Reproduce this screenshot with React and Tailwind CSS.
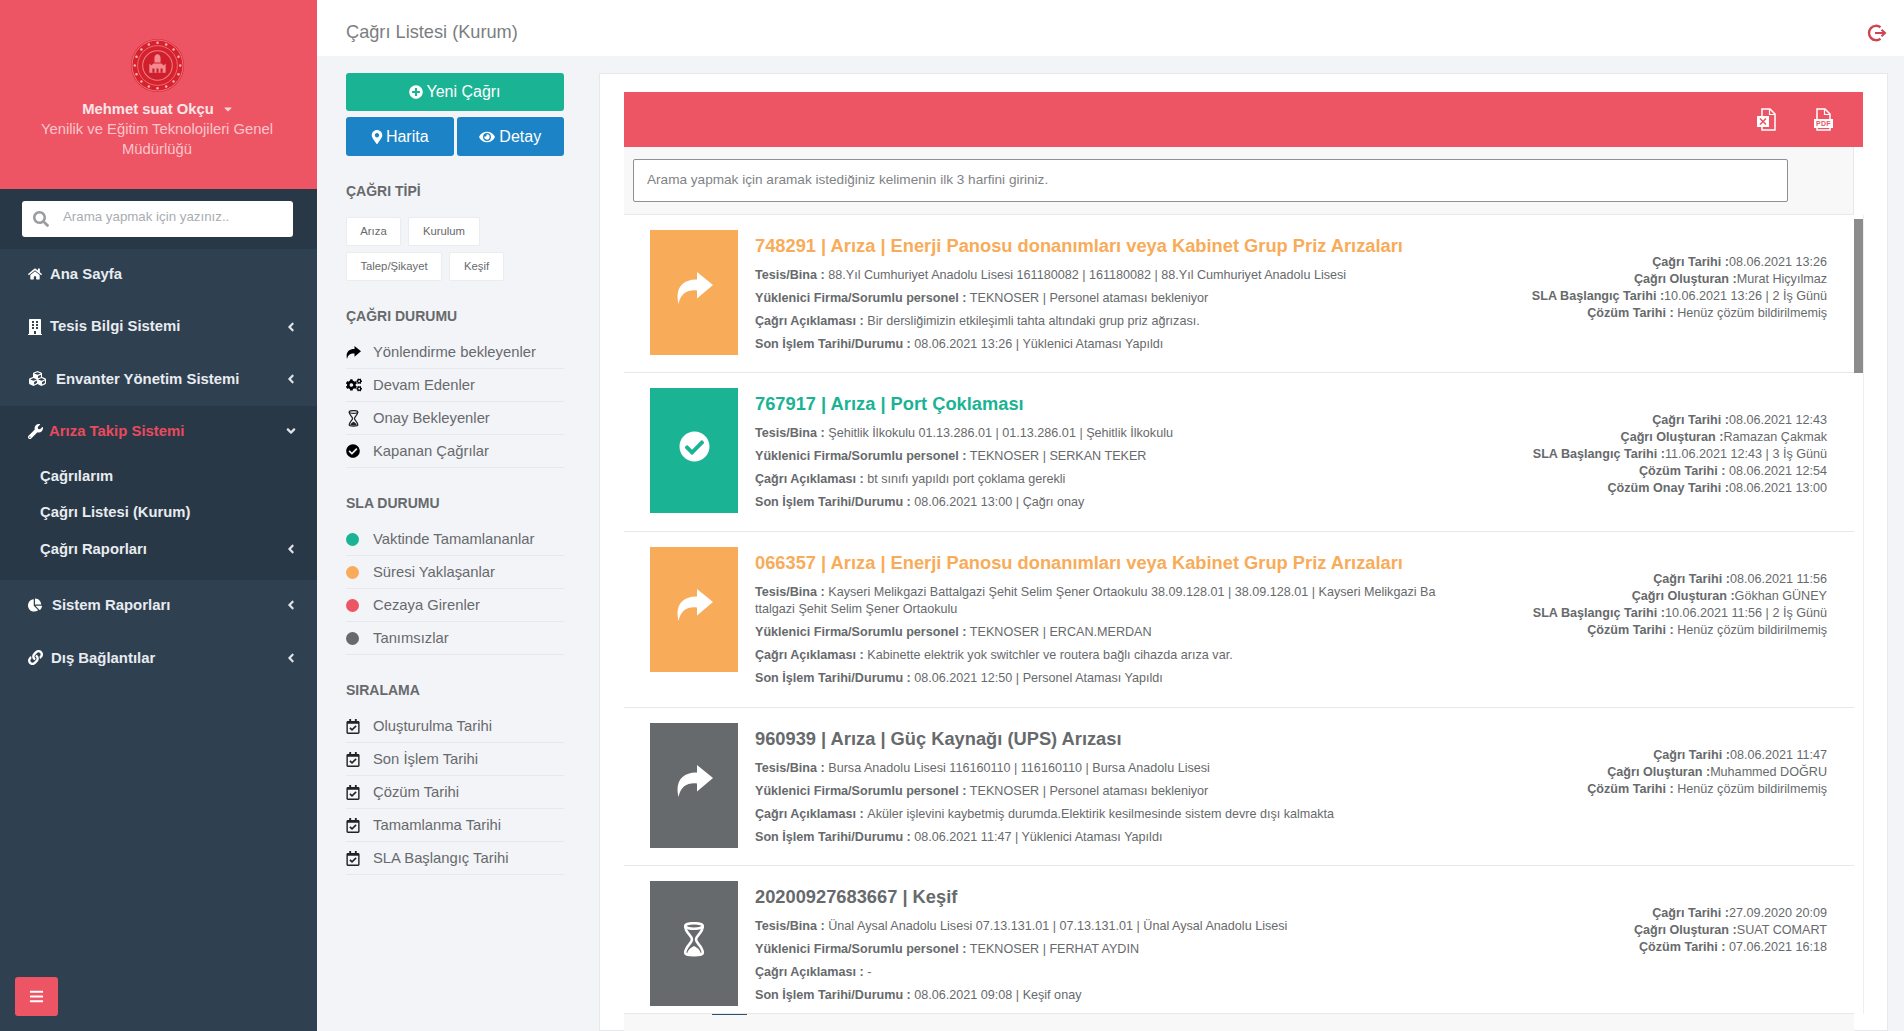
import React from 'react';
import {
  FaAngleDown, FaAngleLeft, FaBars, FaBuilding, FaCaretDown, FaChartPie, FaCheckCircle,
  FaCogs, FaCubes, FaEye, FaHome, FaLink, FaMapMarkerAlt, FaPlusCircle, FaRegCalendarCheck,
  FaSearch, FaWrench,
} from 'react-icons/fa';

const calls = [
  {
    title: '748291 | Arıza | Enerji Panosu donanımları veya Kabinet Grup Priz Arızaları',
    color: 'text-[#f8ac59]', box: 'bg-[#f8ac59]', icon: 'share', h: 'h-[158px]',
    tesis: ['88.Yıl Cumhuriyet Anadolu Lisesi 161180082 | 161180082 | 88.Yıl Cumhuriyet Anadolu Lisesi'],
    firma: 'TEKNOSER | Personel ataması bekleniyor',
    desc: 'Bir dersliğimizin etkileşimli tahta altındaki grup priz ağrızası.',
    son: '08.06.2021 13:26 | Yüklenici Ataması Yapıldı',
    right: [['Çağrı Tarihi :', '08.06.2021 13:26'], ['Çağrı Oluşturan :', 'Murat Hiçyılmaz'], ['SLA Başlangıç Tarihi :', '10.06.2021 13:26 | 2 İş Günü'], ['Çözüm Tarihi : ', 'Henüz çözüm bildirilmemiş']],
  },
  {
    title: '767917 | Arıza | Port Çoklaması',
    color: 'text-[#1ab394]', box: 'bg-[#1ab394]', icon: 'check', h: 'h-[159px]',
    tesis: ['Şehitlik İlkokulu 01.13.286.01 | 01.13.286.01 | Şehitlik İlkokulu'],
    firma: 'TEKNOSER | SERKAN TEKER',
    desc: 'bt sınıfı yapıldı port çoklama gerekli',
    son: '08.06.2021 13:00 | Çağrı onay',
    right: [['Çağrı Tarihi :', '08.06.2021 12:43'], ['Çağrı Oluşturan :', 'Ramazan Çakmak'], ['SLA Başlangıç Tarihi :', '11.06.2021 12:43 | 3 İş Günü'], ['Çözüm Tarihi : ', '08.06.2021 12:54'], ['Çözüm Onay Tarihi :', '08.06.2021 13:00']],
  },
  {
    title: '066357 | Arıza | Enerji Panosu donanımları veya Kabinet Grup Priz Arızaları',
    color: 'text-[#f8ac59]', box: 'bg-[#f8ac59]', icon: 'share', h: 'h-[176px]',
    tesis: ['Kayseri Melikgazi Battalgazi Şehit Selim Şener Ortaokulu 38.09.128.01 | 38.09.128.01 | Kayseri Melikgazi Ba', 'ttalgazi Şehit Selim Şener Ortaokulu'],
    firma: 'TEKNOSER | ERCAN.MERDAN',
    desc: 'Kabinette elektrik yok switchler ve routera bağlı cihazda arıza var.',
    son: '08.06.2021 12:50 | Personel Ataması Yapıldı',
    right: [['Çağrı Tarihi :', '08.06.2021 11:56'], ['Çağrı Oluşturan :', 'Gökhan GÜNEY'], ['SLA Başlangıç Tarihi :', '10.06.2021 11:56 | 2 İş Günü'], ['Çözüm Tarihi : ', 'Henüz çözüm bildirilmemiş']],
  },
  {
    title: '960939 | Arıza | Güç Kaynağı (UPS) Arızası',
    color: 'text-[#676a6c]', box: 'bg-[#676a6c]', icon: 'share', h: 'h-[158px]',
    tesis: ['Bursa Anadolu Lisesi 116160110 | 116160110 | Bursa Anadolu Lisesi'],
    firma: 'TEKNOSER | Personel ataması bekleniyor',
    desc: 'Aküler işlevini kaybetmiş durumda.Elektirik kesilmesinde sistem devre dışı kalmakta',
    son: '08.06.2021 11:47 | Yüklenici Ataması Yapıldı',
    right: [['Çağrı Tarihi :', '08.06.2021 11:47'], ['Çağrı Oluşturan :', 'Muhammed DOĞRU'], ['Çözüm Tarihi : ', 'Henüz çözüm bildirilmemiş']],
  },
  {
    title: '20200927683667 | Keşif',
    color: 'text-[#676a6c]', box: 'bg-[#676a6c]', icon: 'hourglass', h: 'h-[148px]',
    tesis: ['Ünal Aysal Anadolu Lisesi 07.13.131.01 | 07.13.131.01 | Ünal Aysal Anadolu Lisesi'],
    firma: 'TEKNOSER | FERHAT AYDIN',
    desc: '-',
    son: '08.06.2021 09:08 | Keşif onay',
    right: [['Çağrı Tarihi :', '27.09.2020 20:09'], ['Çağrı Oluşturan :', 'SUAT COMART'], ['Çözüm Tarihi : ', '07.06.2021 16:18']],
  },
];

const Logo = () => (
  <svg viewBox="0 0 52 52" className="w-[53px] h-[53px]">
    <circle cx="26" cy="26" r="26" fill="#d7212e" />
    <circle cx="26" cy="26" r="25" fill="none" stroke="#f28a8f" strokeWidth="0.8" />
    <circle cx="26" cy="26" r="19.5" fill="none" stroke="#f59a9d" strokeWidth="0.6" />
    <circle cx="26" cy="26" r="14.5" fill="#d01f2c" stroke="#ef8085" strokeWidth="1" />
    {Array.from({ length: 16 }).map((_, i) => {
      const a = (i / 16) * Math.PI * 2;
      return <circle key={i} cx={26 + Math.cos(a) * 22.3} cy={26 + Math.sin(a) * 22.3} r="1.2" fill="#f8b4b6" />;
    })}
    <path d="M26 15c2 0 3 2 3 4v4h-6v-4c0-2 1-4 3-4zM18 24l2 2 2-2h8l2 2 2-2v9H18z" fill="#f48a8f" />
    <path d="M21 29h2v4h-2zM25 29h2v4h-2zM29 29h2v4h-2z" fill="#c91d2a" />
  </svg>
);

const LogoutIcon = () => (
  <svg viewBox="0 0 20 20" className="w-[20px] h-[20px]" fill="none" stroke="#d04452" strokeWidth="2.4">
    <path d="M13.5 4.2A7.2 7.2 0 1 0 13.5 15.8" />
    <path d="M8 10h10M14.5 6.8 18 10l-3.5 3.2" strokeWidth="2" />
  </svg>
);

// font-awesome 4 style forward arrow, the tail is thinner than the one in react-icons
const ShareIcon = ({ className }) => (
  <svg viewBox="0 0 37 32" className={className} fill="currentColor">
    <path d="M21 0 37 13 21 26.5V18.5C12 17.5 5 20.5 2.5 32-1.5 16 7 7 21 7.5Z" />
  </svg>
);

const HourglassIcon = ({ className }) => (
  <svg viewBox="0 0 22 35" className={className} fill="none" stroke="currentColor" strokeWidth="2.6">
    <ellipse cx="11" cy="4" rx="8.8" ry="2.8" />
    <path d="M2.2 4C2.2 11 9 13.5 9 17.5S2.2 24 2.2 31C2.2 34 19.8 34 19.8 31 19.8 24 13 21.5 13 17.5S19.8 11 19.8 4" />
    <path d="M4 32C5 27 9 25 11 24 13 25 17 27 18 32Z" fill="currentColor" stroke="none" />
  </svg>
);

const ExcelIcon = () => (
  <svg viewBox="0 0 19 24" className="w-[19px] h-[24px]">
    <path d="M5 8V1h8l5 5v16H5v-3" fill="none" stroke="#fff" strokeWidth="1.5" />
    <path d="M12.5 1v5.5H18" fill="none" stroke="#fff" strokeWidth="1.2" />
    <rect x="0" y="8" width="12" height="11" fill="#fff" />
    <path d="M3 10.5 9 16.5M9 10.5 3 16.5" stroke="#ed5565" strokeWidth="1.6" />
  </svg>
);

const PdfIcon = () => (
  <svg viewBox="0 0 19 24" className="w-[19px] h-[24px]">
    <path d="M3 11V1h8l5 5v5M3 20v2h13v-2" fill="none" stroke="#fff" strokeWidth="1.5" />
    <path d="M10.5 1v5.5H16" fill="none" stroke="#fff" strokeWidth="1.2" />
    <rect x="0" y="11" width="19" height="9" fill="#fff" />
    <text x="9.5" y="18" textAnchor="middle" fontSize="7" fontWeight="700" fill="#ed5565" letterSpacing="0.3">PDF</text>
  </svg>
);

const NavItem = ({ icon, label, gap = 'gap-[7px]', chevron = true, open = false }) => (
  <div className="h-[52.4px] flex items-center pl-[28px] pr-[19px] pb-[2px]">
    <span className={`flex items-center ${gap} flex-1 font-bold text-[14.9px] ${open ? 'text-[#e84a5f]' : 'text-[#e8ecf0]'}`}>
      <span className="text-white">{icon}</span>
      {label}
    </span>
    {chevron && (open ? <FaAngleDown className="text-[#dfe4ea] w-[14px] h-[14px]" /> : <FaAngleLeft className="text-[#dfe4ea] w-[14px] h-[14px]" />)}
  </div>
);

const FilterItem = ({ icon, label }) => (
  <div className="h-[33px] flex items-center border-b border-[#e7e8ec] text-[#676a6c] text-[14.8px]">
    <span className="w-[27px] flex items-center">{icon}</span>
    {label}
  </div>
);

const Heading = ({ children, className = '' }) => (
  <h5 className={`font-bold text-[14px] text-[#676a6c] leading-[20px] ${className}`}>{children}</h5>
);

const Tag = ({ children, className = '' }) => (
  <span className={`flex items-center justify-center bg-white border border-[#ebecef] rounded-[2px] text-[11.3px] text-[#676a6c] h-[29px] ${className}`}>{children}</span>
);

const CallRow = ({ call }) => (
  <div className={`${call.h} flex border-b border-[#e7e8ec] pl-[26px] pt-[15px] shrink-0`}>
    <div className={`w-[88px] h-[125px] ${call.box} flex items-center justify-center text-white shrink-0 ${call.icon === 'check' ? 'pb-[8px]' : call.icon === 'share' ? 'pb-[10px]' : 'pb-[8px]'}`}>
      {call.icon === 'share' && <ShareIcon className="w-[37px] h-[32px]" />}
      {call.icon === 'check' && <FaCheckCircle className="w-[31px] h-[31px]" />}
      {call.icon === 'hourglass' && <HourglassIcon className="w-[22px] h-[35px]" />}
    </div>
    <div className="w-[700px] ml-[17px] pt-[6px] text-[12.6px] text-[#676a6c]">
      <h3 className={`font-bold text-[18.3px] leading-[20px] ${call.color}`}>{call.title}</h3>
      <div className="mt-[11px] leading-[17px]">
        <b>Tesis/Bina : </b>{call.tesis[0]}
        {call.tesis[1] && <><br />{call.tesis[1]}</>}
      </div>
      <div className="mt-[6px] leading-[17px]"><b>Yüklenici Firma/Sorumlu personel : </b>{call.firma}</div>
      <div className="mt-[6px] leading-[17px]"><b>Çağrı Açıklaması : </b>{call.desc}</div>
      <div className="mt-[6px] leading-[17px]"><b>Son İşlem Tarihi/Durumu : </b>{call.son}</div>
    </div>
    <div className="flex-1 pr-[27px] pt-[24px] text-right text-[12.6px] leading-[17px] text-[#676a6c]">
      {call.right.map(([k, v]) => (
        <div key={k}><b>{k}</b>{v}</div>
      ))}
    </div>
  </div>
);

export default function App() {
  return (
    <div className="flex h-[1031px] w-[1904px] overflow-hidden bg-[#f3f4f8] font-['Liberation_Sans',Arial,sans-serif]">
      {/* sidebar */}
      <aside className="w-[317px] shrink-0 bg-[#2f4050] flex flex-col">
        <div className="h-[189px] bg-[#ed5565] flex flex-col items-center pt-[39px] pr-[3px] text-center">
          <Logo />
          <div className="mt-[7px] ml-[2px] flex items-center gap-[8px] font-bold text-[14.8px] leading-[20px] text-[#fbe6e8]">
            Mehmet suat Okçu <FaCaretDown className="w-[12px] h-[12px] text-[#fbd5d8]" />
          </div>
          <div className="w-[260px] text-[14.8px] leading-[20px] text-[#fac5ca]">Yenilik ve Eğitim Teknolojileri Genel Müdürlüğü</div>
        </div>
        <div className="h-[60px] bg-[#293846] pt-[12px] pl-[22px] pr-[24px]">
          <div className="h-[36px] bg-white rounded-[3px] flex items-center pl-[11px] pb-[4px] gap-[14px] text-[13.3px] text-[#a9adb2]">
            <FaSearch className="w-[16px] h-[16px] mt-[4px] text-[#9a9da0]" />
            Arama yapmak için yazınız..
          </div>
        </div>
        <NavItem icon={<FaHome className="w-[14px] h-[14px]" />} label="Ana Sayfa" gap="gap-[8px]" chevron={false} />
        <NavItem icon={<FaBuilding className="w-[14px] h-[16px]" />} label="Tesis Bilgi Sistemi" gap="gap-[8px]" />
        <NavItem icon={<FaCubes className="w-[19px] h-[17px]" />} label="Envanter Yönetim Sistemi" gap="gap-[9px]" />
        <div className="bg-[#293846] h-[174px]">
          <NavItem icon={<FaWrench className="w-[15px] h-[15px]" />} label="Arıza Takip Sistemi" gap="gap-[6px]" open />
          <div className="-mt-[1px] text-[14.8px] font-bold text-[#e8ecf0] pl-[40px] pr-[19px]">
            <div className="h-[36.5px] flex items-center">Çağrılarım</div>
            <div className="h-[36.5px] flex items-center">Çağrı Listesi (Kurum)</div>
            <div className="h-[36.5px] flex items-center justify-between">
              Çağrı Raporları <FaAngleLeft className="text-[#dfe4ea] w-[14px] h-[14px]" />
            </div>
          </div>
        </div>
        <NavItem icon={<FaChartPie className="w-[14px] h-[14px]" />} label="Sistem Raporları" gap="gap-[10px]" />
        <NavItem icon={<FaLink className="w-[15px] h-[15px]" />} label="Dış Bağlantılar" gap="gap-[8px]" />
        <div className="mt-auto mb-[15px] ml-[15px] w-[43px] h-[39px] rounded-[3px] bg-[#ed5565] flex items-center justify-center text-white">
          <FaBars className="w-[15px] h-[15px]" />
        </div>
      </aside>

      {/* content */}
      <div className="flex-1 flex flex-col min-w-0">
        <header className="h-[56px] shrink-0 bg-white flex items-center justify-between pl-[29px] pr-[17px] pt-[9px] text-[18.2px] text-[#7b7e80]">
          Çağrı Listesi (Kurum)
          <LogoutIcon />
        </header>
        <div className="flex-1 flex min-h-0 pl-[29px] pr-[16px] pt-[17px]">
          {/* filters */}
          <div className="w-[218px] shrink-0 mr-[35px]">
            <button className="w-full h-[38px] bg-[#1ab394] rounded-[3px] text-white text-[16px] flex items-center justify-center gap-[3px]">
              <FaPlusCircle className="w-[14px] h-[14px]" /> Yeni Çağrı
            </button>
            <div className="flex gap-[3px] mt-[6px]">
              <button className="flex-1 h-[39px] bg-[#1c84c6] rounded-[3px] text-white text-[16px] flex items-center justify-center gap-[3px]">
                <FaMapMarkerAlt className="w-[12px] h-[14px]" /> Harita
              </button>
              <button className="flex-1 h-[39px] bg-[#1c84c6] rounded-[3px] text-white text-[16px] flex items-center justify-center gap-[4px]">
                <FaEye className="w-[16px] h-[14px]" /> Detay
              </button>
            </div>

            <Heading className="mt-[25px]">ÇAĞRI TİPİ</Heading>
            <div className="flex gap-[7px] mt-[16px]">
              <Tag className="w-[55px]">Arıza</Tag>
              <Tag className="w-[72px]">Kurulum</Tag>
            </div>
            <div className="flex gap-[7px] mt-[6px]">
              <Tag className="w-[96px]">Talep/Şikayet</Tag>
              <Tag className="w-[55px]">Keşif</Tag>
            </div>

            <Heading className="mt-[25px]">ÇAĞRI DURUMU</Heading>
            <div className="mt-[10px]">
              <FilterItem icon={<ShareIcon className="w-[15px] h-[13px] text-black" />} label="Yönlendirme bekleyenler" />
              <FilterItem icon={<FaCogs className="w-[16px] h-[14px] text-black" />} label="Devam Edenler" />
              <FilterItem icon={<HourglassIcon className="ml-[2px] w-[11px] h-[17px] text-[#222]" />} label="Onay Bekleyenler" />
              <FilterItem icon={<FaCheckCircle className="w-[14px] h-[14px] text-black" />} label="Kapanan Çağrılar" />
            </div>

            <Heading className="mt-[25px]">SLA DURUMU</Heading>
            <div className="mt-[10px]">
              <FilterItem icon={<span className="w-[13px] h-[13px] rounded-full bg-[#1ab394]" />} label="Vaktinde Tamamlananlar" />
              <FilterItem icon={<span className="w-[13px] h-[13px] rounded-full bg-[#f8ac59]" />} label="Süresi Yaklaşanlar" />
              <FilterItem icon={<span className="w-[13px] h-[13px] rounded-full bg-[#ed5565]" />} label="Cezaya Girenler" />
              <FilterItem icon={<span className="w-[13px] h-[13px] rounded-full bg-[#676a6c]" />} label="Tanımsızlar" />
            </div>

            <Heading className="mt-[25px]">SIRALAMA</Heading>
            <div className="mt-[10px]">
              {['Oluşturulma Tarihi', 'Son İşlem Tarihi', 'Çözüm Tarihi', 'Tamamlanma Tarihi', 'SLA Başlangıç Tarihi'].map((t) => (
                <FilterItem key={t} icon={<FaRegCalendarCheck className="w-[14px] h-[15px] text-[#222]" />} label={t} />
              ))}
            </div>
          </div>

          {/* list card */}
          <div className="flex-1 min-w-0 bg-white border border-[#e7e8ec] pl-[24px] pr-[24px] pt-[18px] flex flex-col">
            <div className="h-[55px] shrink-0 bg-[#ed5565] flex items-center justify-end gap-[38px] pr-[30px]">
              <ExcelIcon />
              <PdfIcon />
            </div>
            <div className="flex shrink-0 h-[68px]">
              <div className="flex-1 min-w-0 bg-[#f8f8f9] border-b border-r border-[#e7e8ec] pt-[12px] pl-[9px]">
                <div className="w-[1155px] h-[43px] bg-white border border-[#8e9092] rounded-[2px] flex items-center pl-[13px] text-[13.6px] text-[#7f8386]">
                  Arama yapmak için aramak istediğiniz kelimenin ilk 3 harfini giriniz.
                </div>
              </div>
              <div className="w-[9px] shrink-0" />
            </div>
            <div className="flex min-h-0 h-[799px] border-r border-[#eeeff2] -mr-[1px]">
              <div className="flex-1 min-w-0">
                {calls.map((c) => <CallRow key={c.title} call={c} />)}
                <div className="h-[17px] bg-[#f8f8f9] pl-[88px]">
                  <div className="w-[35px] h-[1px] bg-[#2f4f6f]" />
                </div>
              </div>
              <div className="w-[9px] shrink-0 pt-[4px]">
                <div className="h-[154px] bg-[#8c8c8c]" />
              </div>
            </div>
          </div>
        </div>
      </div>
    </div>
  );
}
